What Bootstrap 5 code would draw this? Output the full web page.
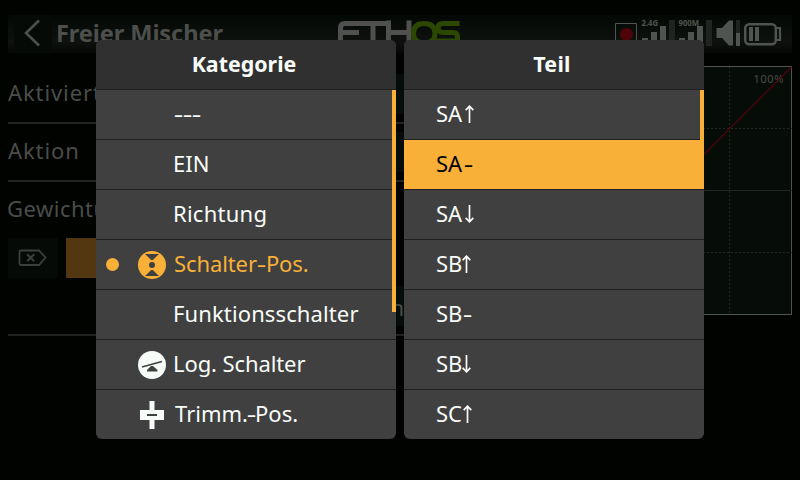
<!DOCTYPE html>
<html lang="de">
<head>
<meta charset="utf-8">
<meta name="viewport" content="width=device-width, initial-scale=1">
<title>Freier Mischer</title>
<link href="https://cdn.jsdelivr.net/npm/bootstrap@5.3.0/dist/css/bootstrap.min.css" rel="stylesheet">
<style>
  body { width: 800px; height: 480px; background: #000300; font-family: "Noto Sans", sans-serif; font-size: 22px; line-height: 30px; color: #4a4d4a; }
  svg { display: block; flex: none; }
  .titlebar { height: 38px; margin: 15px 8px 0; background: linear-gradient(#040805, #0a0e0b 40%, #0e110e 70%, #050805); }
  .back-btn { width: 38px; height: 38px; margin-left: 6px; background: #060a07; }
  .page-title { margin: -3px 0 0 4px; font-size: 23.6px; font-weight: 700; width: 281px; letter-spacing: -.1px; color: #4c4f4c; }
  .form-area { width: 534px; margin-left: 8px; padding-top: 13px; }
  .form-line { height: 58px; border-bottom: 2px solid #1f2321; padding: 8px 0; letter-spacing: .9px; }
  .form-line span { padding-bottom: 5px; }
  .weight-label { letter-spacing: .5px; margin-left: -1px; padding-top: 11px; height: 48px; }
  .field-box { width: 170px; height: 40px; background: #060c08; letter-spacing: .9px; }
  .clear-btn { width: 50px; height: 40px; background: #060a07; }
  .amber-btn { width: 120px; height: 40px; background: #523710; }
  .start-row { height: 58px; border-bottom: 2px solid #1f2321; padding-left: 292px; }
  .start-field { width: 104px; padding-top: 6px; letter-spacing: 0; }
  .picker-layer { padding: 40px 96px 0; gap: 8px; }
  .picker { width: 300px; height: 399px; border-radius: 6px; background: #404040; color: #f8fcf8; }
  .picker-head { height: 50px; background: #303030; border-bottom: 1px solid #202020; font-weight: 700; font-size: 21.4px; padding-bottom: 2px; }
  .picker-row { height: 50px; border-bottom: 1px solid #202020; padding-bottom: 3px; white-space: pre; }
  .last-row { border-bottom: 0; height: 49px; padding-bottom: 3px; }
  .dot-slot { width: 42px; padding: 2px 0 0 10px; }
  .dot { width: 13px; height: 13px; border-radius: 50%; background: #f8b038; }
  .icon-slot { width: 28px; margin-right: 7px; padding-top: 3px; }
  .part-row { padding-left: 32px; }
  .arrow { margin: 1px 0 0 2.5px; }
  .dash { display: inline-block; transform: scaleX(1.35); margin: 0 1px 0 1px; }
  .dashes .dash { margin: 0 0 0 2px; }
  .part-row .dash { margin-left: 3px; }
  .chosen { color: #f8b038; }
  .selected { background: #f8b038; color: #000; }
  .thumb { right: 0; top: 50px; width: 4px; background: #f8b038; }
</style>
<script src="https://cdn.jsdelivr.net/npm/bootstrap@5.3.0/dist/js/bootstrap.bundle.min.js"></script>
</head>
<body class="overflow-hidden position-relative m-0">
<svg width="0" height="0" class="position-absolute">
  <symbol id="arrow-up" viewBox="0 0 9 18"><path d="M4.500 18V1.500M.700 5.200L4.500 1.200L8.300 5.200" fill="none" stroke="#f8fcf8" stroke-width="1.700"/></symbol>
  <symbol id="arrow-down" viewBox="0 0 9 18"><path d="M4.500 0V16.500M.700 12.800L4.500 16.800L8.300 12.800" fill="none" stroke="#f8fcf8" stroke-width="1.700"/></symbol>
</svg>
<div class="d-flex flex-column">
  <header class="titlebar d-flex align-items-center">
    <div class="back-btn"><svg width="38" height="38" fill="none" stroke="#4c504c" stroke-width="2.6"><path d="M25 5.500L12 18L25 30.500"/></svg></div>
    <div class="page-title">Freier Mischer</div>
    <svg width="126" height="38" fill="none" stroke-width="5">
      <path stroke="#505050" d="M3.500 33V13Q3.500 8.500 8 8.500H49M3.500 17.500H22M36 8V33M51.500 5.500V33M72 5.500V33M52 17.500H72"/>
      <path stroke="#2c4800" d="M98 18.500Q98 8.500 87 8.500Q76.500 8.500 76.500 18.500Q76.500 28 87 28Q98 28 98 18.500ZM122.500 8.500H106Q101 8.500 101 13Q101 17.500 106 17.500H116Q120.500 17.500 120.500 22V26H99"/>
    </svg>
    <svg class="ms-auto" width="177" height="38" fill="#505450">
      <path fill="none" stroke="#505450" d="M.5 8.500H21.500V30H.5Z"/><circle cx="11.500" cy="19.500" r="6.500" fill="#500408"/>
      <path d="M27 23h6v6h-6zM36 17h6v12h-6zM45 11h6v18h-6zM64 23h6v6h-6zM73 17h6v12h-6zM82 11h6v18h-6z"/>
      <path fill="#202420" d="M54 5h6v26h-6zM91 5h6v26h-6zM121 5h4v14h-4z"/>
      <path d="M101.500 13h5.500l7-7.500h4v25h-4l-7-7.500h-5.500zM121 18h4v13h-4z"/>
      <rect x="130.200" y="9.200" width="30.600" height="20" rx="4" fill="none" stroke="#505450" stroke-width="2.500"/><path d="M134 12h4v14h-4zM140 12h4v14h-4z"/><path fill="none" stroke="#505450" stroke-width="2.200" d="M161 13h4v12h-4"/>
      <text x="26.500" y="11" font-size="8" font-weight="700" textLength="16.500" lengthAdjust="spacingAndGlyphs">2.4G</text><text x="63.500" y="11" font-size="8" font-weight="700" textLength="20.500" lengthAdjust="spacingAndGlyphs">900M</text>
    </svg>
  </header>
  <div class="d-flex">
    <main class="form-area">
      <div class="form-line d-flex justify-content-between align-items-center"><span>Aktiviert</span><div class="field-box"></div></div>
      <div class="form-line d-flex justify-content-between align-items-center"><span>Aktion</span><div class="field-box"></div></div>
      <div class="weight-label">Gewichtung</div>
      <div class="d-flex gap-2 pt-2">
        <div class="clear-btn"><svg width="50" height="40" fill="none" stroke="#3c403c" stroke-width="1.800"><path d="M13 12.500H31L37.500 19.500L31 27H13Q11.500 27 11.500 25.500V14Q11.500 12.500 13 12.500Z"/><path stroke-width="2" d="M19.200 16.200l7 7m0-7l-7 7"/></svg></div>
        <div class="amber-btn"></div>
      </div>
      <div class="start-row pt-2"><div class="field-box start-field text-end">h</div></div>
    </main>
    <svg class="ms-auto" width="258" height="264">
      <rect x="1.500" y="13.500" width="248" height="248" fill="#060c08" stroke="#505450"/>
      <path d="M1 137.500H250" stroke="#202824"/><path fill="none" stroke="#202824" stroke-dasharray="2 2" d="M1 75.500H250M1 199.500H250M187.500 14V261"/>
      <text x="211.500" y="30" font-size="11" letter-spacing=".6" fill="#484c48">100%</text>
      <path d="M2 261L249.500 14" stroke="#500408" stroke-width="1.200"/>
    </svg>
  </div>
</div>
<div class="picker-layer d-flex position-absolute top-0 start-0">
  <section class="picker position-relative overflow-hidden">
    <div class="picker-head d-flex align-items-center justify-content-center pe-1">Kategorie</div>
    <div class="picker-row d-flex align-items-center"><span class="dot-slot"></span><span class="icon-slot"></span><span class="dashes"><span class="dash">-</span><span class="dash">-</span><span class="dash">-</span></span></div>
    <div class="picker-row d-flex align-items-center"><span class="dot-slot"></span><span class="icon-slot"></span><span>EIN</span></div>
    <div class="picker-row d-flex align-items-center"><span class="dot-slot"></span><span class="icon-slot"></span><span style="letter-spacing:.25px">Richtung</span></div>
    <div class="picker-row d-flex align-items-center chosen"><span class="dot-slot"><span class="dot d-block"></span></span><span class="icon-slot"><svg width="28" height="28"><circle cx="14" cy="14" r="14" fill="#f8b038"/><path fill="#404040" d="M7 3H21L14.800 9h-1.600zM7 25H21L14.800 19h-1.600z"/><circle cx="14" cy="14" r="3" fill="#404040"/></svg></span><span class="ps-1" style="margin-left:-3px;letter-spacing:-.1px">Schalter<span class="dash">-</span>Pos.</span></div>
    <div class="picker-row d-flex align-items-center"><span class="dot-slot"></span><span class="icon-slot"></span><span style="letter-spacing:.12px">Funktionsschalter</span></div>
    <div class="picker-row d-flex align-items-center"><span class="dot-slot"></span><span class="icon-slot"><svg width="28" height="28"><circle cx="14" cy="14" r="14" fill="#f8fcf8"/><path d="M4 16L24 10.500" stroke="#404040" stroke-width="1.600"/><path fill="#404040" d="M9 20.500V19L13 15h2L19.500 19v1.500z"/></svg></span><span style="letter-spacing:-.1px">Log. Schalter</span></div>
    <div class="picker-row last-row d-flex align-items-center"><span class="dot-slot"></span><span class="icon-slot"><svg width="28" height="28"><path fill="#f8fcf8" d="M2 9h24v10H2zM11.500 0h5v28h-5z"/><path fill="#404040" d="M9 13h10v2H9z"/></svg></span><span class="ps-1" style="margin-left:-2px">Trimm.<span class="dash" style="margin:0">-</span>Pos.</span></div>
    <div class="thumb position-absolute" style="height:222px"></div>
  </section>
  <section class="picker position-relative overflow-hidden">
    <div class="picker-head d-flex align-items-center justify-content-center pe-1" style="letter-spacing:.3px">Teil</div>
    <div class="picker-row part-row d-flex align-items-center">SA<svg class="arrow" width="9" height="18"><use href="#arrow-up"/></svg></div>
    <div class="picker-row part-row d-flex align-items-center selected">SA<span class="dash">-</span></div>
    <div class="picker-row part-row d-flex align-items-center">SA<svg class="arrow" width="9" height="18"><use href="#arrow-down"/></svg></div>
    <div class="picker-row part-row d-flex align-items-center">SB<svg class="arrow" width="9" height="18" style="margin-left:0"><use href="#arrow-up"/></svg></div>
    <div class="picker-row part-row d-flex align-items-center">SB<span class="dash" style="margin-left:1.500px">-</span></div>
    <div class="picker-row part-row d-flex align-items-center">SB<svg class="arrow" width="9" height="18" style="margin-left:0"><use href="#arrow-down"/></svg></div>
    <div class="picker-row last-row part-row d-flex align-items-center">SC<svg class="arrow" width="9" height="18" style="margin-left:1px"><use href="#arrow-up"/></svg></div>
    <div class="thumb position-absolute" style="height:50px"></div>
  </section>
</div>
</body>
</html>
